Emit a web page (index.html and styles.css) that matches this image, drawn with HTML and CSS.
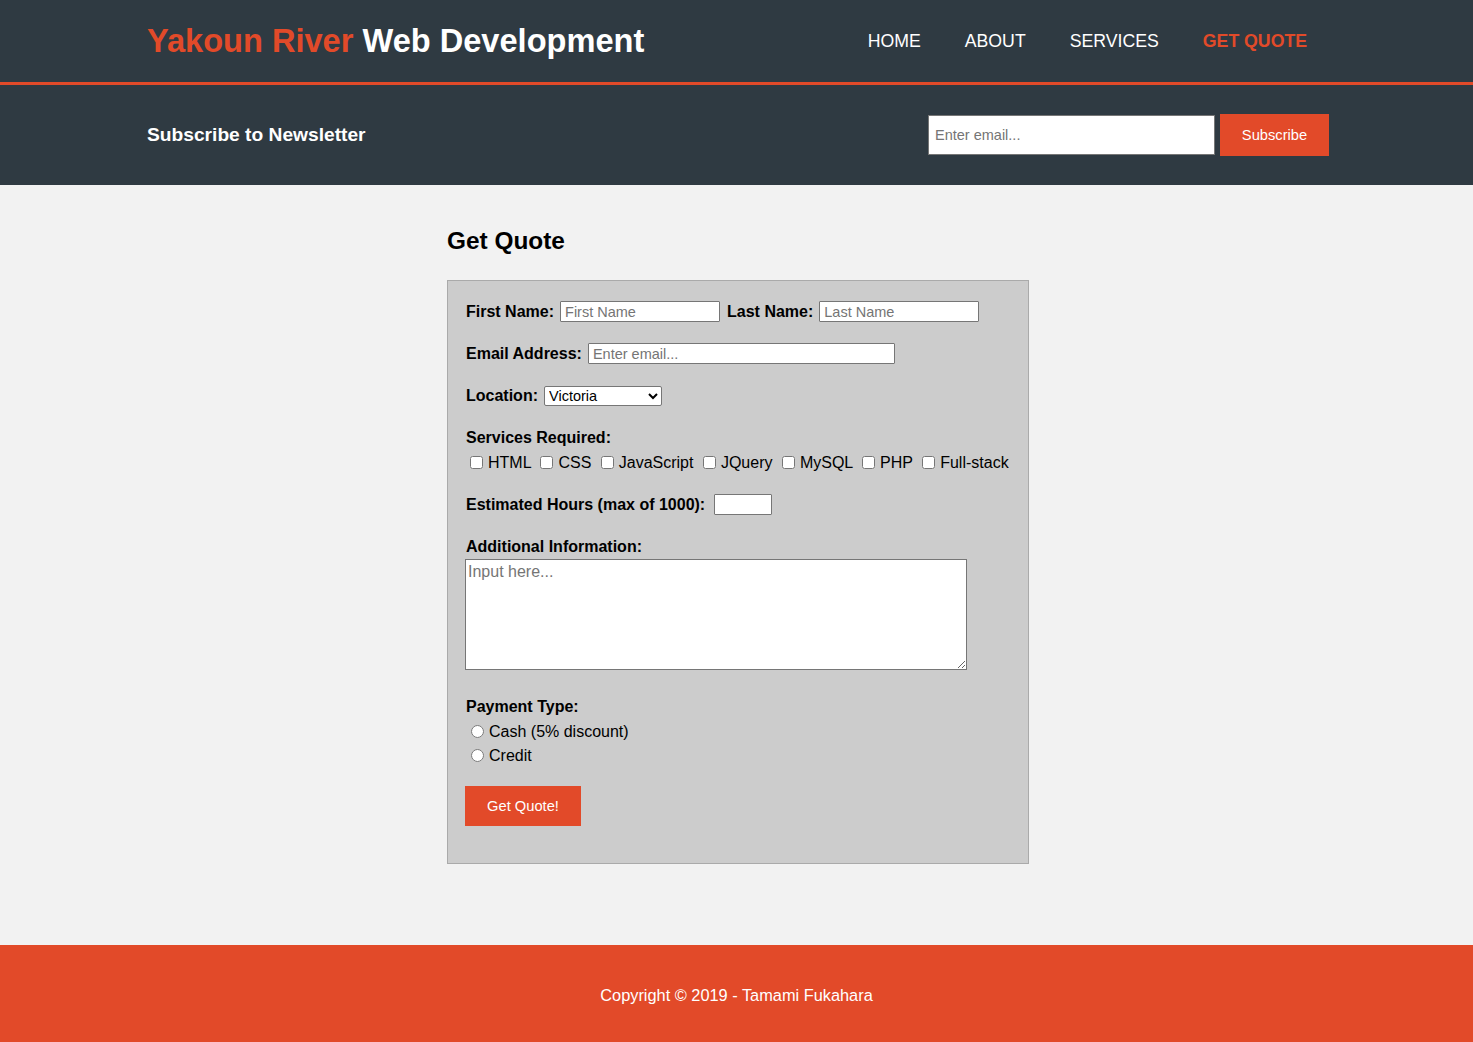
FILE: index.html
```html
<!DOCTYPE html>
<html lang="en">
<head>
<meta charset="utf-8">
<title>Get Quote - Yakoun River Web Development</title>
<link rel="stylesheet" href="styles.css">
</head>
<body>
<header class="site-header">
  <div class="header-inner">
    <h1 class="logo"><span class="logo-accent">Yakoun River</span> Web Development</h1>
    <nav class="nav">
      <a href="#" class="nav-link">HOME</a>
      <a href="#" class="nav-link">ABOUT</a>
      <a href="#" class="nav-link">SERVICES</a>
      <a href="#" class="nav-link active">GET QUOTE</a>
    </nav>
  </div>
</header>
<section class="newsletter">
  <div class="newsletter-inner">
    <h3 class="newsletter-title">Subscribe to Newsletter</h3>
    <form class="newsletter-form">
      <input type="email" class="newsletter-input" placeholder="Enter email...">
      <button type="button" class="newsletter-btn">Subscribe</button>
    </form>
  </div>
</section>
<main class="main">
  <div class="main-inner">
    <h2 class="page-title">Get Quote</h2>
    <form class="quote-form">
      <div class="row r1">
        <label class="lbl">First Name:</label>
        <input type="text" class="field w160" placeholder="First Name">
        <label class="lbl">Last Name:</label>
        <input type="text" class="field w160" placeholder="Last Name">
      </div>
      <div class="row r2">
        <label class="lbl">Email Address:</label>
        <input type="email" class="field w307" placeholder="Enter email...">
      </div>
      <div class="row r3">
        <label class="lbl">Location:</label>
        <select class="select">
          <option>Victoria</option>
          <option>Vancouver</option>
          <option>Nanaimo</option>
        </select>
      </div>
      <div class="lbl-line services-lbl">Services Required:</div>
      <div class="check-line"><input type="checkbox">HTML <input type="checkbox">CSS <input type="checkbox">JavaScript <input type="checkbox">JQuery <input type="checkbox">MySQL <input type="checkbox">PHP <input type="checkbox">Full-stack</div>
      <div class="row r5">
        <label class="lbl">Estimated Hours (max of 1000):</label>
        <input type="number" class="field w58">
      </div>
      <div class="lbl-line info-lbl">Additional Information:</div>
      <textarea class="textarea" placeholder="Input here..."></textarea>
      <div class="lbl-line pay-lbl">Payment Type:</div>
      <div class="radio-line first"><input type="radio" name="pay">Cash (5% discount)</div>
      <div class="radio-line"><input type="radio" name="pay">Credit</div>
      <button type="button" class="quote-btn">Get Quote!</button>
    </form>
  </div>
</main>
<footer class="site-footer">
  <p class="copyright">Copyright © 2019 - Tamami Fukahara</p>
</footer>
</body>
</html>
```
FILE: styles.css
```css
* { box-sizing: border-box; }

body {
  margin: 0;
  font-family: "Liberation Sans", Arial, sans-serif;
  font-size: 16px;
  color: #000;
  background: #f2f2f2;
}

/* Header */
.site-header {
  background: #2f3a42;
  border-bottom: 3px solid #e24a29;
}
.header-inner {
  padding: 0 144px 0 147px;
  height: 82px;
  display: flex;
  align-items: center;
  justify-content: space-between;
}
.logo {
  margin: 0;
  font-size: 32.6px;
  font-weight: bold;
  color: #fff;
}
.logo-accent { color: #e24a29; }
.nav { display: flex; }
.nav-link {
  color: #fff;
  text-decoration: none;
  font-size: 17.7px;
  padding: 0 22px;
}
.nav-link.active {
  color: #e24a29;
  font-weight: bold;
}

/* Newsletter */
.newsletter { background: #2f3a42; }
.newsletter-inner {
  padding: 0 144px 0 147px;
  height: 100px;
  display: flex;
  align-items: center;
  justify-content: space-between;
}
.newsletter-title {
  margin: 0;
  color: #fff;
  font-size: 19.2px;
  font-weight: bold;
}
.newsletter-form {
  display: flex;
  align-items: center;
  gap: 5px;
}
.newsletter-input {
  width: 287px;
  height: 40px;
  border: 1px solid #767676;
  padding: 0 6px;
  font-family: "Liberation Sans", Arial, sans-serif;
  font-size: 14.5px;
  background: #fff;
}
.newsletter-btn {
  width: 109px;
  height: 42px;
  border: none;
  background: #e24a29;
  color: #fff;
  font-family: "Liberation Sans", Arial, sans-serif;
  font-size: 14.7px;
}

/* Main */
.main {
  padding: 42px 0 81px;
}
.main-inner {
  width: 582px;
  margin-left: calc(50% - 289.5px);
}
.page-title {
  margin: 0 0 25px;
  font-size: 24.4px;
  line-height: 28px;
  font-weight: bold;
}
.quote-form {
  background: #cccccc;
  border: 1px solid #aaaaaa;
  padding: 20px 17px 37px;
  display: flex;
  flex-direction: column;
  align-items: flex-start;
}
.row {
  display: flex;
  align-items: flex-start;
  gap: 6px;
  height: 22px;
}
.r1 { gap: 5px 6px; }
.r2, .r3 { margin-top: 20px; }
.r5 { margin-top: 21px; gap: 9px; }
.lbl {
  font-weight: bold;
  font-size: 16px;
  line-height: 22px;
  padding-left: 1px;
}
.lbl-line {
  font-weight: bold;
  font-size: 16px;
  line-height: 18px;
  padding-left: 1px;
}
.services-lbl { margin-top: 22px; }
.info-lbl { margin-top: 22px; }
.pay-lbl { margin-top: 28px; }
.field {
  height: 21px;
  border: 1px solid #767676;
  border-radius: 1px;
  padding: 1px 4px;
  font-family: "Liberation Sans", Arial, sans-serif;
  font-size: 14.5px;
  background: #fff;
}
.field::placeholder, .newsletter-input::placeholder, .textarea::placeholder { color: #757575; }
.w160 { width: 160px; }
.w307 { width: 307px; }
.w58 { width: 58px; }
.select {
  margin-top: 1px;
  width: 118px;
  height: 20px;
  font-family: "Liberation Sans", Arial, sans-serif;
  font-size: 14.5px;
  border: 1px solid #767676;
  border-radius: 2px;
  background: #fff;
  color: #000;
}
.check-line {
  margin-top: 6px;
  height: 20px;
  line-height: 20px;
  font-size: 16px;
}
.check-line input {
  margin: 3px 5px 3px 5px;
  vertical-align: -1px;
}
.textarea {
  margin-top: 3px;
  width: 502px;
  height: 111px;
  border: 1px solid #767676;
  padding: 3px 2px;
  font-family: "Liberation Sans", Arial, sans-serif;
  font-size: 16px;
  background: #fff;
  resize: both;
}
.radio-line {
  height: 20px;
  line-height: 20px;
  margin-top: 4px;
  font-size: 16px;
}
.radio-line.first { margin-top: 6px; }
.radio-line input {
  margin: 3px 5px 0 6px;
  vertical-align: -1px;
}
.quote-btn {
  margin-top: 20px;
  width: 116px;
  height: 40px;
  border: none;
  background: #e24a29;
  color: #fff;
  font-family: "Liberation Sans", Arial, sans-serif;
  font-size: 14.7px;
}

/* Footer */
.site-footer {
  background: #e24a29;
  height: 97px;
  display: flex;
  align-items: center;
  justify-content: center;
  padding-top: 3px;
}
.copyright {
  margin: 0;
  color: #fff;
  font-size: 16.35px;
}
```
